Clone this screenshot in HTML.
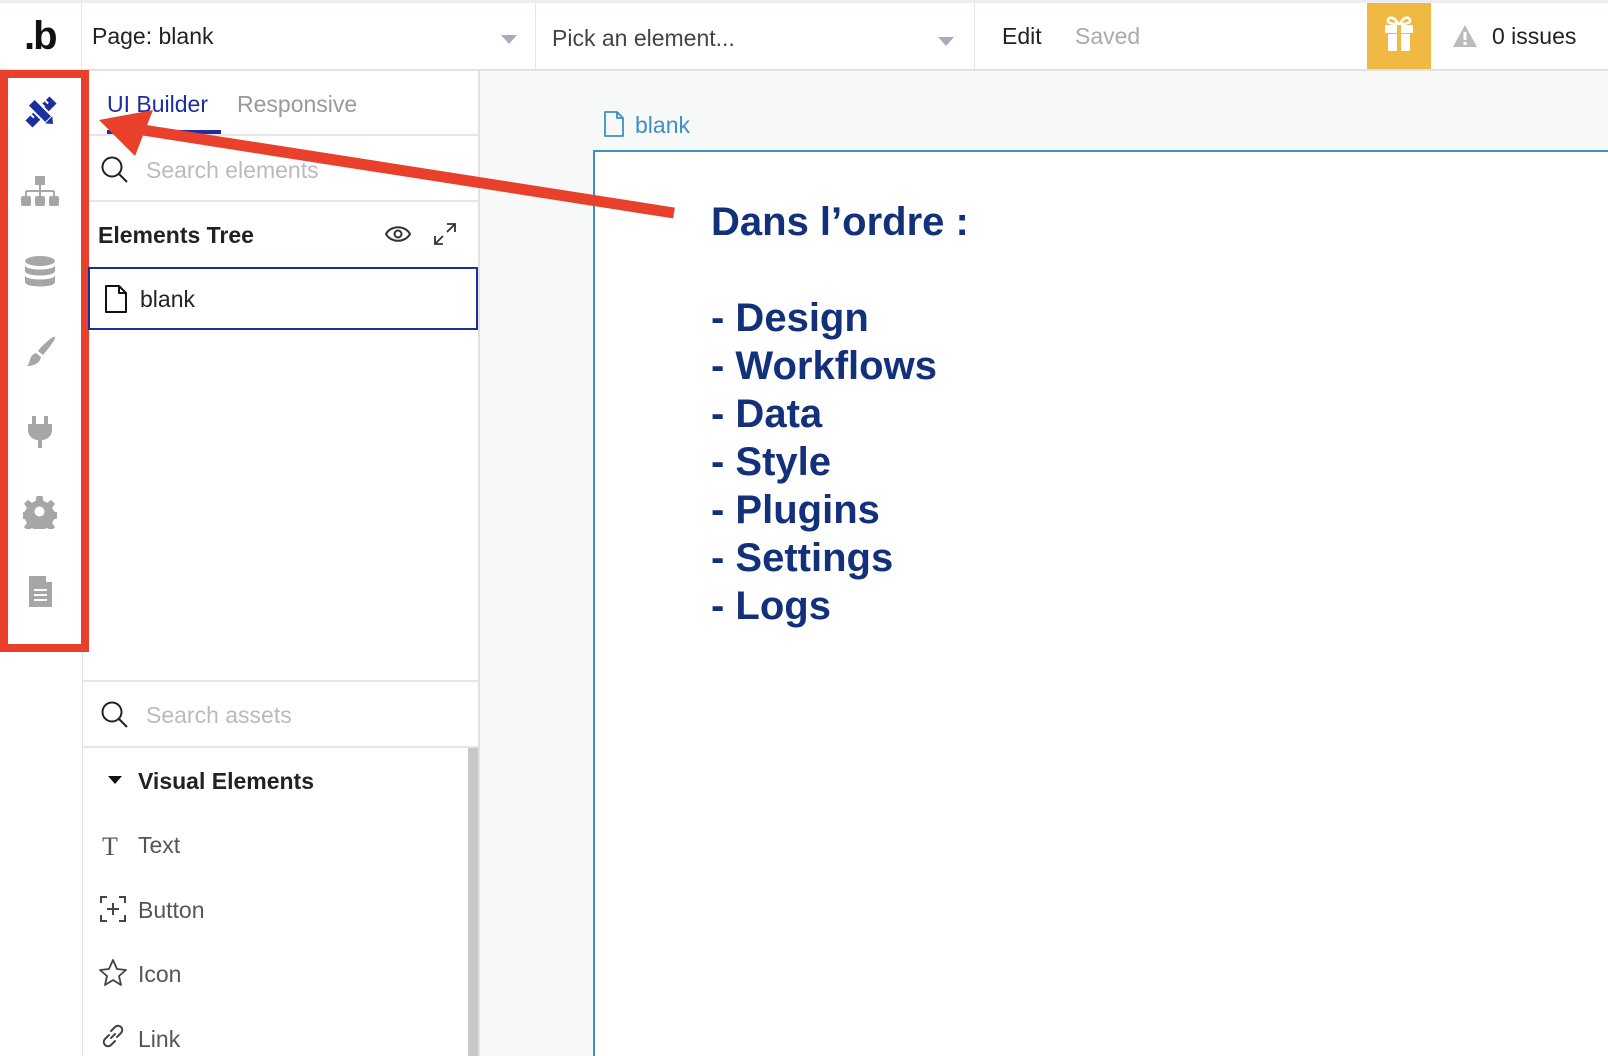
<!DOCTYPE html>
<html><head><meta charset="utf-8"><style>
*{box-sizing:border-box;margin:0;padding:0}
body{width:1608px;height:1056px;overflow:hidden;background:#fff;font-family:"Liberation Sans",sans-serif;position:relative;color:#222}
.a{position:absolute}
.t{font-size:23px;white-space:nowrap}
.g{color:#999}
.list{font-weight:bold;font-size:40px;color:#13307a;line-height:48px;white-space:nowrap}
</style></head><body>
<!-- top bar -->
<div class="a" style="left:0;top:0;width:1608px;height:3px;background:#eceef2"></div>
<div class="a" style="left:0;top:69px;width:1608px;height:2px;background:#e2e2e2"></div>
<div class="a t" style="left:24px;top:14px;font-size:40px;font-weight:bold;color:#111;letter-spacing:-2px">.b</div>
<div class="a" style="left:81px;top:3px;width:1px;height:66px;background:#e6e6e6"></div>
<div class="a t" style="left:92px;top:23px">Page: blank</div>
<div class="a" style="left:501px;top:35px;border-left:8px solid transparent;border-right:8px solid transparent;border-top:9px solid #aab"></div>
<div class="a" style="left:535px;top:3px;width:1px;height:66px;background:#e6e6e6"></div>
<div class="a t" style="left:552px;top:25px;color:#444">Pick an element...</div>
<div class="a" style="left:938px;top:37px;border-left:8px solid transparent;border-right:8px solid transparent;border-top:9px solid #aab"></div>
<div class="a" style="left:974px;top:3px;width:1px;height:66px;background:#e6e6e6"></div>
<div class="a t" style="left:1002px;top:23px">Edit</div>
<div class="a t g" style="left:1075px;top:23px;color:#aaa">Saved</div>
<div class="a" style="left:1367px;top:3px;width:64px;height:66px;background:#f0b944">
<svg width="64" height="66" viewBox="0 0 64 66"><path d="M31 21c-3-7-9-8-10-4-1 3 4 4 10 4zM33 21c3-7 9-8 10-4 1 3-4 4-10 4z" stroke="#fff" stroke-width="2.5" fill="none"/><rect x="18" y="22" width="28" height="8" rx="1" fill="#fff"/><rect x="21" y="31" width="22" height="17" rx="1" fill="#fff"/><rect x="30" y="22" width="4" height="26" fill="#f0b944"/></svg></div>
<svg class="a" style="left:1452px;top:24px" width="26" height="24" viewBox="0 0 26 24"><path d="M13 1L25 23H1z" fill="#bbb"/><rect x="11.5" y="8" width="3" height="8" fill="#fff"/><rect x="11.5" y="18" width="3" height="3" fill="#fff"/></svg>
<div class="a t" style="left:1492px;top:23px">0 issues</div>

<!-- left rail -->
<div class="a" style="left:82px;top:71px;width:1px;height:985px;background:#e2e2e2"></div>
<svg class="a" style="left:24px;top:95px" width="34" height="34" viewBox="0 0 34 34">
<g transform="rotate(45 17 17)"><rect x="12" y="0" width="10" height="34" fill="#1c2fa0"/><path d="M12 6h4M12 11h4M12 16h4M12 21h4M12 26h4" stroke="#fff" stroke-width="2"/></g>
<g transform="rotate(-45 17 17)"><rect x="12" y="3" width="10" height="25" fill="#1c2fa0" stroke="#fff" stroke-width="2"/><path d="M12 28l5 6 5-6z" fill="#1c2fa0"/></g></svg>
<svg class="a" style="left:20px;top:175px" width="40" height="34" viewBox="0 0 40 34"><rect x="15" y="1" width="10" height="9" rx="1" fill="#a5a7a6"/><path d="M20 10v6M6 16h28M6 16v5M20 16v5M34 16v5" stroke="#a5a7a6" stroke-width="2"/><rect x="1" y="21" width="10" height="10" rx="2" fill="#a5a7a6"/><rect x="15" y="21" width="10" height="10" rx="2" fill="#a5a7a6"/><rect x="29" y="21" width="10" height="10" rx="2" fill="#a5a7a6"/></svg>
<svg class="a" style="left:24px;top:255px" width="32" height="34" viewBox="0 0 32 34"><ellipse cx="16" cy="6" rx="15" ry="5" fill="#a5a7a6"/><path d="M1 10c0 6 30 6 30 0v6c0 6-30 6-30 0zM1 20c0 6 30 6 30 0v7c0 6-30 6-30 0z" fill="#a5a7a6"/></svg>
<svg class="a" style="left:23px;top:335px" width="34" height="34" viewBox="0 0 34 34"><path d="M32 2c2 1-10 16-12 18l-5-4C17 13 30 0 32 2z" fill="#a5a7a6"/><path d="M13 18l5 4c-1 6-7 9-14 9 4-3 1-10 9-13z" fill="#a5a7a6"/></svg>
<svg class="a" style="left:27px;top:415px" width="26" height="34" viewBox="0 0 26 34"><rect x="5" y="1" width="4" height="8" fill="#a5a7a6"/><rect x="17" y="1" width="4" height="8" fill="#a5a7a6"/><path d="M1 9h24v6c0 6-5 10-10 10v8h-4v-8C6 25 1 21 1 15z" fill="#a5a7a6"/></svg>
<svg class="a" style="left:23px;top:495px" width="34" height="34" viewBox="0 0 34 34"><path d="M14 1h6l1 5 4 2 4-3 4 4-3 4 2 4 5 1v6l-5 1-2 4 3 4-4 4-4-3-4 2-1 5h-6l-1-5-4-2-4 3-4-4 3-4-2-4-5-1v-6l5-1 2-4-3-4 4-4 4 3 4-2z" fill="#a5a7a6" transform="scale(.97)"/><circle cx="16.5" cy="16.5" r="5" fill="#fff"/></svg>
<svg class="a" style="left:28px;top:575px" width="25" height="33" viewBox="0 0 25 33"><path d="M1 1h17l6 6v25H1z" fill="#a5a7a6"/><path d="M18 1v6h6" fill="#fff"/><path d="M6 15h13M6 20h13M6 25h13" stroke="#fff" stroke-width="2"/></svg>
<div class="a" style="left:0;top:70px;width:89px;height:582px;border:8px solid #e8402a"></div>

<!-- panel -->
<div class="a" style="left:478px;top:71px;width:2px;height:985px;background:#e2e2e2"></div>
<div class="a t" style="left:107px;top:91px;color:#1c2fa0">UI Builder</div>
<div class="a" style="left:107px;top:130px;width:114px;height:5px;background:#1c2fa0"></div>
<div class="a t g" style="left:237px;top:91px">Responsive</div>
<div class="a" style="left:89px;top:134px;width:389px;height:2px;background:#e6e6e6"></div>
<svg class="a" style="left:100px;top:155px" width="30" height="30" viewBox="0 0 30 30"><circle cx="12" cy="12" r="9.5" stroke="#222" stroke-width="2" fill="none"/><path d="M19 19l8 8" stroke="#222" stroke-width="2"/></svg>
<div class="a t" style="left:146px;top:157px;color:#bbb">Search elements</div>
<div class="a" style="left:89px;top:200px;width:389px;height:2px;background:#e6e6e6"></div>
<div class="a t" style="left:98px;top:222px;font-weight:bold;font-size:23px">Elements Tree</div>
<svg class="a" style="left:385px;top:224px" width="26" height="20" viewBox="0 0 26 20"><path d="M1 10C6 1 20 1 25 10 20 19 6 19 1 10z" stroke="#333" stroke-width="2" fill="none"/><circle cx="13" cy="10" r="3.5" stroke="#333" stroke-width="2" fill="none"/></svg>
<svg class="a" style="left:433px;top:222px" width="24" height="24" viewBox="0 0 24 24"><path d="M14 2h8v8M22 2l-8 8M10 22H2v-8M2 22l8-8" stroke="#333" stroke-width="1.8" fill="none"/></svg>
<div class="a" style="left:88px;top:267px;width:390px;height:63px;border:2px solid #1c2fa0"></div>
<svg class="a" style="left:105px;top:285px" width="22" height="28" viewBox="0 0 22 28"><path d="M1 1h13l7 7v19H1z M14 1v7h7" stroke="#111" stroke-width="2" fill="none" stroke-linejoin="round"/></svg>
<div class="a t" style="left:140px;top:286px">blank</div>
<div class="a" style="left:82px;top:680px;width:396px;height:2px;background:#e6e6e6"></div>
<svg class="a" style="left:100px;top:700px" width="30" height="30" viewBox="0 0 30 30"><circle cx="12" cy="12" r="9.5" stroke="#222" stroke-width="2" fill="none"/><path d="M19 19l8 8" stroke="#222" stroke-width="2"/></svg>
<div class="a t" style="left:146px;top:702px;color:#bbb">Search assets</div>
<div class="a" style="left:82px;top:746px;width:396px;height:2px;background:#e6e6e6"></div>
<div class="a" style="left:468px;top:748px;width:10px;height:308px;background:#c8c8c8"></div>
<div class="a" style="left:108px;top:776px;border-left:7px solid transparent;border-right:7px solid transparent;border-top:8px solid #111"></div>
<div class="a t" style="left:138px;top:768px;font-weight:bold">Visual Elements</div>
<div class="a t" style="left:102px;top:832px;color:#555;font-family:'Liberation Serif',serif;font-size:26px">T</div>
<div class="a t" style="left:138px;top:832px;color:#555">Text</div>
<svg class="a" style="left:100px;top:896px" width="26" height="26" viewBox="0 0 26 26"><path d="M7 1H1v6M19 1h6v6M1 19v6h6M25 19v6h-6M13 7v12M7 13h12" stroke="#444" stroke-width="2" fill="none"/></svg>
<div class="a t" style="left:138px;top:897px;color:#555">Button</div>
<svg class="a" style="left:98px;top:958px" width="30" height="30" viewBox="0 0 30 30"><path d="M15 2l4 9 9 1-7 6 2 9-8-5-8 5 2-9-7-6 9-1z" stroke="#444" stroke-width="1.8" fill="none" stroke-linejoin="round"/></svg>
<div class="a t" style="left:138px;top:961px;color:#555">Icon</div>
<svg class="a" style="left:100px;top:1023px" width="26" height="26" viewBox="0 0 26 26"><path d="M11 15l4-4M9 12l-4 4a4 4 0 006 6l4-4M17 14l4-4a4 4 0 00-6-6l-4 4" stroke="#444" stroke-width="2" fill="none" stroke-linecap="round"/></svg>
<div class="a t" style="left:138px;top:1026px;color:#555">Link</div>

<!-- canvas -->
<div class="a" style="left:480px;top:71px;width:1128px;height:985px;background:#f7f8f8"></div>
<svg class="a" style="left:604px;top:111px" width="20" height="26" viewBox="0 0 20 26"><path d="M1 1h12l6 6v18H1z M13 1v6h6" stroke="#3d8fc6" stroke-width="1.8" fill="none" stroke-linejoin="round"/></svg>
<div class="a t" style="left:635px;top:112px;color:#3d8fc6">blank</div>
<div class="a" style="left:593px;top:150px;width:1015px;height:906px;background:#fff;border-left:2px solid #3d8fc6;border-top:2px solid #3d8fc6"></div>
<div class="a list" style="left:711px;top:198px">Dans l’ordre :<br><br>- Design<br>- Workflows<br>- Data<br>- Style<br>- Plugins<br>- Settings<br>- Logs</div>

<!-- arrow -->
<svg class="a" style="left:0;top:0" width="1608" height="1056"><path d="M674 213L130 128" stroke="#e8402a" stroke-width="11"/><path d="M99 120L153 110L135 156z" fill="#e8402a"/></svg>
</body></html>
